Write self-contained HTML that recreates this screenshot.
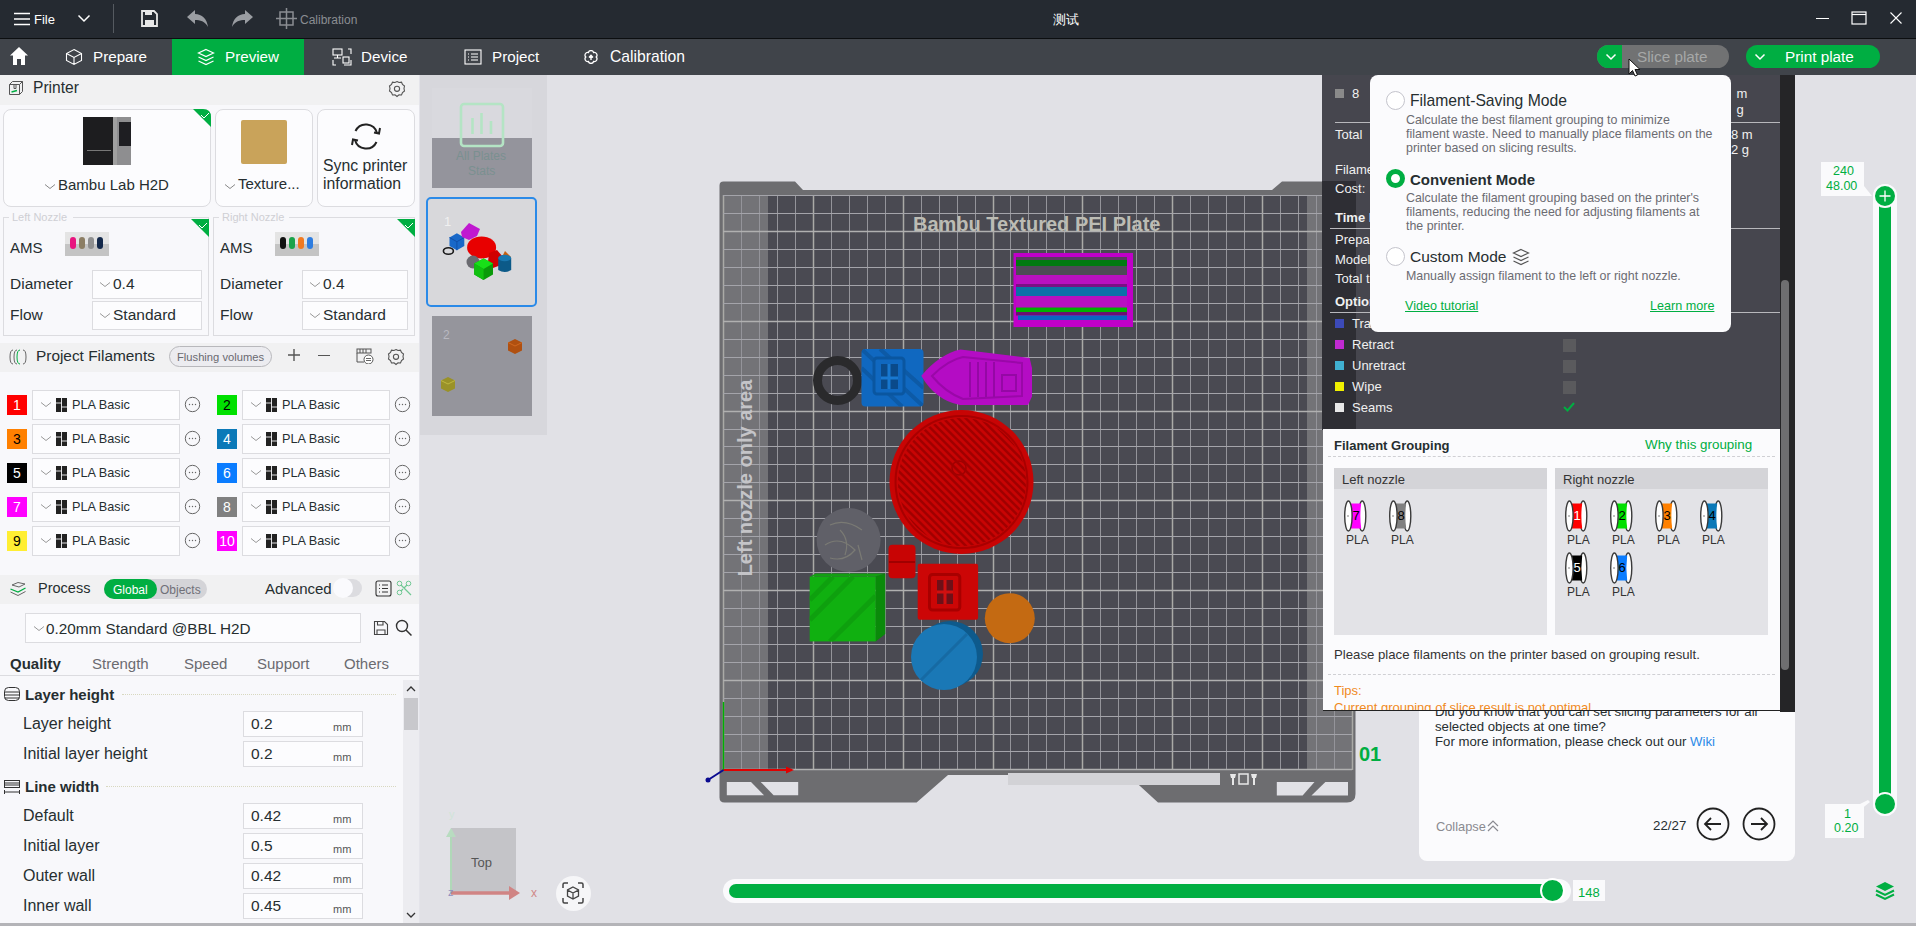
<!DOCTYPE html>
<html><head><meta charset="utf-8">
<style>
*{margin:0;padding:0;box-sizing:border-box}
html,body{width:1916px;height:926px;overflow:hidden;background:#e2e2e7;font-family:"Liberation Sans",sans-serif;position:relative}
.a{position:absolute}
.t{position:absolute;white-space:nowrap}
</style></head><body>
<div class="a" style="left:0px;top:0px;width:1916px;height:38px;background:#252a31;"></div>
<div class="a" style="left:0px;top:38px;width:1916px;height:1px;background:#0c0e10;"></div>
<svg class="a" style="left:13px;top:11px;" width="18" height="16" viewBox="0 0 18 16"><path d="M1 2.5H17M1 8H17M1 13.5H17" stroke="#fff" stroke-width="1.6"/></svg>
<div class="t" style="left:34px;top:12.50px;font-size:13px;line-height:13px;color:#fff;">File</div>
<svg class="a" style="left:77px;top:14px;" width="14" height="9" viewBox="0 0 14 9"><path d="M1.5 1.5L7 7L12.5 1.5" stroke="#fff" stroke-width="1.5" fill="none"/></svg>
<div class="a" style="left:113px;top:4px;width:1px;height:29px;background:#555a60;"></div>
<svg class="a" style="left:140px;top:9px;" width="19" height="19" viewBox="0 0 19 19"><path d="M2 2H14L17 5V17H2Z" stroke="#e8e8e8" stroke-width="1.8" fill="none"/><rect x="5" y="2" width="7" height="4" fill="#e8e8e8"/><rect x="5" y="11" width="9" height="6" fill="#e8e8e8"/></svg>
<svg class="a" style="left:186px;top:9px;" width="23" height="19" viewBox="0 0 23 19"><path d="M9 1L1 8L9 15V11C14 11 19 12 22 18C21 10 16 5 9 5Z" fill="#9a9da2"/></svg>
<svg class="a" style="left:231px;top:9px;" width="23" height="19" viewBox="0 0 23 19"><path d="M14 1L22 8L14 15V11C9 11 4 12 1 18C2 10 7 5 14 5Z" fill="#9a9da2"/></svg>
<svg class="a" style="left:276px;top:8px;" width="21" height="22" viewBox="0 0 21 22"><rect x="4" y="4" width="13" height="13" stroke="#8a8d92" stroke-width="1.5" fill="none"/><path d="M10.5 0V21M0 10.5H21" stroke="#8a8d92" stroke-width="1.5"/></svg>
<div class="t" style="left:300px;top:14.34px;font-size:12px;line-height:12px;color:#8a8d92;">Calibration</div>
<div class="t" style="left:1053px;top:12.50px;font-size:13px;line-height:13px;color:#fff;">测试</div>
<div class="a" style="left:1816px;top:18px;width:13px;height:1px;background:#fff;"></div>
<svg class="a" style="left:1851px;top:11px;" width="16" height="14" viewBox="0 0 16 14"><rect x="1" y="1" width="14" height="12" stroke="#fff" stroke-width="1.2" fill="none"/><path d="M1 3.5H15" stroke="#fff" stroke-width="1.2"/></svg>
<svg class="a" style="left:1889px;top:11px;" width="14" height="14" viewBox="0 0 14 14"><path d="M1.5 1.5L12.5 12.5M12.5 1.5L1.5 12.5" stroke="#fff" stroke-width="1.1"/></svg>
<div class="a" style="left:0px;top:39px;width:1916px;height:36px;background:#40444a;"></div>
<svg class="a" style="left:9px;top:46px;" width="20" height="20" viewBox="0 0 20 20"><path d="M10 1L19 9.5H16V19H12V13H8V19H4V9.5H1Z" fill="#fff"/></svg>
<svg class="a" style="left:65px;top:48px;" width="18" height="18" viewBox="0 0 18 18"><path d="M9 1.5L16.5 5.5V12.5L9 16.5L1.5 12.5V5.5Z M1.5 5.5L9 9.5L16.5 5.5M9 9.5V16.5" stroke="#fff" stroke-width="1.1" fill="none"/></svg>
<div class="t" style="left:93px;top:48.63px;font-size:15.2px;line-height:15.2px;color:#fff;">Prepare</div>
<div class="a" style="left:172px;top:39px;width:132px;height:36px;background:#00ae42;"></div>
<svg class="a" style="left:197px;top:48px;" width="18" height="18" viewBox="0 0 18 18"><path d="M9 1.5L16.5 5L9 8.5L1.5 5Z" stroke="#fff" stroke-width="1.2" fill="none"/><path d="M1.5 9L9 12.5L16.5 9M1.5 13L9 16.5L16.5 13" stroke="#fff" stroke-width="1.2" fill="none"/></svg>
<div class="t" style="left:225px;top:48.63px;font-size:15.2px;line-height:15.2px;color:#fff;">Preview</div>
<svg class="a" style="left:332px;top:48px;" width="20" height="18" viewBox="0 0 20 18"><rect x="1" y="1" width="9" height="6" stroke="#fff" stroke-width="1.1" fill="none"/><path d="M5.5 7V10M2 10H9M1 12V17H4M19 6V1H16M12 17H19V12" stroke="#fff" stroke-width="1.1" fill="none"/><rect x="11" y="9" width="6" height="6" stroke="#fff" stroke-width="1.1" fill="none"/></svg>
<div class="t" style="left:361px;top:48.63px;font-size:15.2px;line-height:15.2px;color:#fff;">Device</div>
<svg class="a" style="left:464px;top:49px;" width="18" height="16" viewBox="0 0 18 16"><rect x="1" y="1" width="16" height="14" stroke="#fff" stroke-width="1.1" fill="none"/><path d="M4 5H5M7 5H14M4 8H5M7 8H14M4 11H5M7 11H14" stroke="#fff" stroke-width="1.1"/></svg>
<div class="t" style="left:492px;top:48.63px;font-size:15.2px;line-height:15.2px;color:#fff;">Project</div>
<svg class="a" style="left:584px;top:50px;" width="14" height="14" viewBox="0 0 14 14"><path d="M4.40 2.50A2.7 2.7 0 0 1 9.60 2.50A2.7 2.7 0 0 1 12.20 7.00A2.7 2.7 0 0 1 9.60 11.50A2.7 2.7 0 0 1 4.40 11.50A2.7 2.7 0 0 1 1.80 7.00A2.7 2.7 0 0 1 4.40 2.50Z" stroke="#fff" stroke-width="1.3" fill="none"/><path d="M7 10V5.5M5 7.5L7 5.3L9 7.5" stroke="#fff" stroke-width="1.4" fill="none"/></svg>
<div class="t" style="left:610px;top:48.81px;font-size:15.7px;line-height:15.7px;color:#fff;">Calibration</div>
<div class="a" style="left:1597px;top:45px;width:132px;height:23px;border-radius:12px;background:#717273;overflow:hidden"><div class="a" style="left:0;top:0;width:25px;height:23px;background:#00ae42"></div></div>
<svg class="a" style="left:1605px;top:53px;" width="12" height="8" viewBox="0 0 12 8"><path d="M1.5 1.5L6 6L10.5 1.5" stroke="#fff" stroke-width="1.5" fill="none"/></svg>
<div class="t" style="left:1637px;top:48.55px;font-size:15.3px;line-height:15.3px;color:#a6a8a8;">Slice plate</div>
<div class="a" style="left:1746px;top:45px;width:134px;height:23px;background:#00ae42;border-radius:12px"></div>
<svg class="a" style="left:1754px;top:53px;" width="12" height="8" viewBox="0 0 12 8"><path d="M1.5 1.5L6 6L10.5 1.5" stroke="#fff" stroke-width="1.5" fill="none"/></svg>
<div class="t" style="left:1785px;top:48.55px;font-size:15.3px;line-height:15.3px;color:#fff;">Print plate</div>
<div class="a" style="left:0px;top:75px;width:420px;height:851px;background:#f8f8fb;"></div>
<div class="a" style="left:419px;top:75px;width:1px;height:851px;background:#e4e4ea;"></div>
<div class="a" style="left:0px;top:75px;width:419px;height:30px;background:#f1f1f2;"></div>
<svg class="a" style="left:8px;top:80px;" width="16" height="16" viewBox="0 0 16 16"><path d="M1.5 4.5L4.5 1.5H14.5V11.5L11.5 14.5H1.5Z M1.5 4.5H11.5V14.5M11.5 4.5L14.5 1.5" stroke="#555" stroke-width="1" fill="none"/><path d="M3.5 12L9 10.5" stroke="#00ae42" stroke-width="1.5"/><path d="M6 4.5V8.5H8V4.5" stroke="#555" stroke-width="1" fill="none"/></svg>
<div class="t" style="left:33px;top:80.29px;font-size:15.6px;line-height:15.6px;color:#262e30;">Printer</div>
<svg class="a" style="left:388px;top:80px;" width="18" height="18" viewBox="0 0 18 18"><path d="M9 1.5L11 2.5L13.5 2.2L14.5 4.5L16.5 6L16 8.5L16.5 11L14.5 12.5L13.5 15L11 14.8L9 16.5L7 14.8L4.5 15L3.5 12.5L1.5 11L2 8.5L1.5 6L3.5 4.5L4.5 2.2L7 2.5Z" stroke="#555" stroke-width="1.1" fill="none"/><circle cx="9" cy="8.8" r="2.6" stroke="#555" stroke-width="1.1" fill="none"/></svg>
<div class="a" style="left:3px;top:109px;width:208px;height:98px;background:#fcfcfe;border:1px solid #dcdce0;border-radius:8px"></div>
<svg class="a" style="left:193px;top:109px;" width="18" height="18" viewBox="0 0 18 18"><path d="M0 0H10Q18 0 18 8V18Z" fill="#00ae42"/><path d="M8 6L11 9L16 4" stroke="#fff" stroke-width="1" fill="none"/></svg>
<div class="a" style="left:215px;top:109px;width:98px;height:98px;background:#fcfcfe;border:1px solid #dcdce0;border-radius:8px"></div>
<div class="a" style="left:317px;top:109px;width:98px;height:98px;background:#fcfcfe;border:1px solid #dcdce0;border-radius:8px"></div>
<div class="a" style="left:83px;top:117px;width:48px;height:48px;background:#1d1d1f;"></div>
<div class="a" style="left:113px;top:117px;width:4px;height:48px;background:#a0a0a0;"></div>
<div class="a" style="left:117px;top:117px;width:14px;height:48px;background:#8e8e90;"></div>
<div class="a" style="left:119px;top:122px;width:12px;height:24px;background:#1e1e22;"></div>
<div class="a" style="left:87px;top:150px;width:24px;height:1px;background:#777;"></div>
<svg class="a" style="left:44px;top:183px;" width="12" height="8" viewBox="0 0 12 8"><path d="M1 1.5L6 5.5L11 1.5" stroke="#888" stroke-width="1" fill="none"/></svg>
<div class="t" style="left:58px;top:176.80px;font-size:15px;line-height:15px;color:#262e30;">Bambu Lab H2D</div>
<div class="a" style="left:241px;top:120px;width:46px;height:44px;background:#c9a35a;border-radius:2px"></div>
<svg class="a" style="left:224px;top:183px;" width="12" height="8" viewBox="0 0 12 8"><path d="M1 1.5L6 5.5L11 1.5" stroke="#888" stroke-width="1" fill="none"/></svg>
<div class="t" style="left:238px;top:175.80px;font-size:15px;line-height:15px;color:#262e30;">Texture...</div>
<svg class="a" style="left:350px;top:123px;" width="32" height="27" viewBox="0 0 32 27"><path d="M27 10A11.5 11.5 0 0 0 5.5 8" stroke="#222" stroke-width="2" fill="none"/><path d="M5 17A11.5 11.5 0 0 0 26.5 19" stroke="#222" stroke-width="2" fill="none"/><path d="M24 9.5L29 10.5L30 5" stroke="#222" stroke-width="2" fill="none"/><path d="M8 17.5L3 16.5L2 22" stroke="#222" stroke-width="2" fill="none"/></svg>
<div class="t" style="left:323px;top:158.13px;font-size:15.8px;line-height:15.8px;color:#262e30;">Sync printer</div>
<div class="t" style="left:323px;top:176.13px;font-size:15.8px;line-height:15.8px;color:#262e30;">information</div>
<div class="a" style="left:3px;top:217px;width:206px;height:119px;background:none;border:1px solid #dcdce0"></div>
<div class="a" style="left:9px;top:210px;width:64px;height:14px;background:#f8f8fb;"></div>
<div class="t" style="left:12px;top:212.19px;font-size:11px;line-height:11px;color:#cfcfd4;">Left Nozzle</div>
<svg class="a" style="left:191px;top:219px;" width="18" height="18" viewBox="0 0 18 18"><path d="M0 0H18V18Z" fill="#00ae42"/><path d="M8 6L11 9L16 4" stroke="#fff" stroke-width="1" fill="none"/></svg>
<div class="t" style="left:10px;top:239.80px;font-size:15px;line-height:15px;color:#262e30;">AMS</div>
<div class="a" style="left:65px;top:232px;width:44px;height:12px;background:#e4e4e4;"></div>
<div class="a" style="left:65px;top:244px;width:44px;height:12px;background:#c4c4c4;"></div>
<div class="a" style="left:70px;top:237px;width:6px;height:12px;background:#e8157f;border-radius:3px"></div>
<div class="a" style="left:79px;top:237px;width:6px;height:12px;background:#8c7e64;border-radius:3px"></div>
<div class="a" style="left:88px;top:237px;width:6px;height:12px;background:#8f8f8f;border-radius:3px"></div>
<div class="a" style="left:97px;top:237px;width:6px;height:12px;background:#13284a;border-radius:3px"></div>
<div class="t" style="left:10px;top:276.38px;font-size:15.5px;line-height:15.5px;color:#262e30;">Diameter</div>
<div class="a" style="left:92px;top:270px;width:110px;height:29px;background:#fcfcfe;border:1px solid #dcdce0"></div>
<svg class="a" style="left:99px;top:281px;" width="12" height="8" viewBox="0 0 12 8"><path d="M1 1.5L6 5.5L11 1.5" stroke="#999" stroke-width="1" fill="none"/></svg>
<div class="t" style="left:113px;top:276.38px;font-size:15.5px;line-height:15.5px;color:#262e30;">0.4</div>
<div class="t" style="left:10px;top:307.38px;font-size:15.5px;line-height:15.5px;color:#262e30;">Flow</div>
<div class="a" style="left:92px;top:301px;width:110px;height:29px;background:#fcfcfe;border:1px solid #dcdce0"></div>
<svg class="a" style="left:99px;top:312px;" width="12" height="8" viewBox="0 0 12 8"><path d="M1 1.5L6 5.5L11 1.5" stroke="#999" stroke-width="1" fill="none"/></svg>
<div class="t" style="left:113px;top:307.38px;font-size:15.5px;line-height:15.5px;color:#262e30;">Standard</div>
<div class="a" style="left:213px;top:217px;width:202px;height:119px;background:none;border:1px solid #dcdce0"></div>
<div class="a" style="left:219px;top:210px;width:70px;height:14px;background:#f8f8fb;"></div>
<div class="t" style="left:222px;top:212.19px;font-size:11px;line-height:11px;color:#cfcfd4;">Right Nozzle</div>
<svg class="a" style="left:397px;top:219px;" width="18" height="18" viewBox="0 0 18 18"><path d="M0 0H18V18Z" fill="#00ae42"/><path d="M8 6L11 9L16 4" stroke="#fff" stroke-width="1" fill="none"/></svg>
<div class="t" style="left:220px;top:239.80px;font-size:15px;line-height:15px;color:#262e30;">AMS</div>
<div class="a" style="left:275px;top:232px;width:44px;height:12px;background:#e4e4e4;"></div>
<div class="a" style="left:275px;top:244px;width:44px;height:12px;background:#c4c4c4;"></div>
<div class="a" style="left:280px;top:237px;width:6px;height:12px;background:#111;border-radius:3px"></div>
<div class="a" style="left:289px;top:237px;width:6px;height:12px;background:#1aa34a;border-radius:3px"></div>
<div class="a" style="left:298px;top:237px;width:6px;height:12px;background:#f27a20;border-radius:3px"></div>
<div class="a" style="left:307px;top:237px;width:6px;height:12px;background:#2e7de0;border-radius:3px"></div>
<div class="t" style="left:220px;top:276.38px;font-size:15.5px;line-height:15.5px;color:#262e30;">Diameter</div>
<div class="a" style="left:302px;top:270px;width:106px;height:29px;background:#fcfcfe;border:1px solid #dcdce0"></div>
<svg class="a" style="left:309px;top:281px;" width="12" height="8" viewBox="0 0 12 8"><path d="M1 1.5L6 5.5L11 1.5" stroke="#999" stroke-width="1" fill="none"/></svg>
<div class="t" style="left:323px;top:276.38px;font-size:15.5px;line-height:15.5px;color:#262e30;">0.4</div>
<div class="t" style="left:220px;top:307.38px;font-size:15.5px;line-height:15.5px;color:#262e30;">Flow</div>
<div class="a" style="left:302px;top:301px;width:106px;height:29px;background:#fcfcfe;border:1px solid #dcdce0"></div>
<svg class="a" style="left:309px;top:312px;" width="12" height="8" viewBox="0 0 12 8"><path d="M1 1.5L6 5.5L11 1.5" stroke="#999" stroke-width="1" fill="none"/></svg>
<div class="t" style="left:323px;top:307.38px;font-size:15.5px;line-height:15.5px;color:#262e30;">Standard</div>
<div class="a" style="left:0px;top:343px;width:419px;height:29px;background:#f1f1f2;"></div>
<svg class="a" style="left:9px;top:349px;" width="18" height="16" viewBox="0 0 18 16"><path d="M4 1Q1 1 1 8Q1 15 4 15M8 1Q5 1 5 8Q5 15 8 15M14 1Q17 1 17 8Q17 15 14 15" stroke="#666" stroke-width="1" fill="none"/><path d="M11 1Q8 1 8 8Q8 15 11 15" stroke="#00ae42" stroke-width="1" fill="none"/></svg>
<div class="t" style="left:36px;top:348.46px;font-size:15.4px;line-height:15.4px;color:#262e30;">Project Filaments</div>
<div class="a" style="left:169px;top:346px;width:103px;height:21px;background:#ececf0;border:1px solid #b8b8bc;border-radius:11px"></div>
<div class="t" style="left:177px;top:352.02px;font-size:11.2px;line-height:11.2px;color:#6a6a70;">Flushing volumes</div>
<svg class="a" style="left:288px;top:349px;" width="12" height="12" viewBox="0 0 12 12"><path d="M6 0V12M0 6H12" stroke="#555" stroke-width="1.4"/></svg>
<div class="a" style="left:318px;top:355px;width:12px;height:1.4px;background:#555;"></div>
<svg class="a" style="left:356px;top:348px;" width="18" height="16" viewBox="0 0 18 16"><rect x="1" y="1" width="14" height="4" stroke="#555" stroke-width="1" fill="none"/><path d="M4 1V5M7 1V5M10 1V5M1 5V14H8" stroke="#555" stroke-width="1" fill="none"/><circle cx="12.5" cy="11.5" r="4.5" stroke="#555" stroke-width="1" fill="#fff"/><path d="M10 10.5H15M10 12.5H15" stroke="#555" stroke-width="0.9"/></svg>
<svg class="a" style="left:387px;top:348px;" width="18" height="18" viewBox="0 0 18 18"><path d="M9 1.5L11 2.5L13.5 2.2L14.5 4.5L16.5 6L16 8.5L16.5 11L14.5 12.5L13.5 15L11 14.8L9 16.5L7 14.8L4.5 15L3.5 12.5L1.5 11L2 8.5L1.5 6L3.5 4.5L4.5 2.2L7 2.5Z" stroke="#555" stroke-width="1.1" fill="none"/><circle cx="9" cy="8.8" r="2.6" stroke="#555" stroke-width="1.1" fill="none"/></svg>
<div class="a" style="left:7px;top:395px;width:20px;height:20px;background:#ff0000;"></div>
<div class="t" style="left:7px;top:395px;width:20px;height:20px;line-height:20px;text-align:center;font-size:14px;color:#fff">1</div>
<div class="a" style="left:32px;top:390px;width:148px;height:30px;background:#fcfcfe;border:1px solid #dcdce0"></div>
<svg class="a" style="left:40px;top:401px;" width="12" height="8" viewBox="0 0 12 8"><path d="M1 1.5L6 5.5L11 1.5" stroke="#999" stroke-width="1" fill="none"/></svg>
<svg class="a" style="left:56px;top:398px;" width="11" height="14" viewBox="0 0 11 14"><rect x="0" y="0" width="11" height="14" fill="#222"/><path d="M5.5 0V14M0 5H5.5M5.5 9H11" stroke="#f8f8fb" stroke-width="0.9"/></svg>
<div class="t" style="left:72px;top:398.75px;font-size:12.7px;line-height:12.7px;color:#262e30;">PLA Basic</div>
<svg class="a" style="left:184px;top:396px;" width="17" height="17" viewBox="0 0 17 17"><circle cx="8.5" cy="8.5" r="7.2" stroke="#666" stroke-width="1" fill="none"/><circle cx="5.5" cy="8.5" r="0.7" fill="#666"/><circle cx="8.5" cy="8.5" r="0.7" fill="#666"/><circle cx="11.5" cy="8.5" r="0.7" fill="#666"/></svg>
<div class="a" style="left:217px;top:395px;width:20px;height:20px;background:#00e000;"></div>
<div class="t" style="left:217px;top:395px;width:20px;height:20px;line-height:20px;text-align:center;font-size:14px;color:#000">2</div>
<div class="a" style="left:242px;top:390px;width:148px;height:30px;background:#fcfcfe;border:1px solid #dcdce0"></div>
<svg class="a" style="left:250px;top:401px;" width="12" height="8" viewBox="0 0 12 8"><path d="M1 1.5L6 5.5L11 1.5" stroke="#999" stroke-width="1" fill="none"/></svg>
<svg class="a" style="left:266px;top:398px;" width="11" height="14" viewBox="0 0 11 14"><rect x="0" y="0" width="11" height="14" fill="#222"/><path d="M5.5 0V14M0 5H5.5M5.5 9H11" stroke="#f8f8fb" stroke-width="0.9"/></svg>
<div class="t" style="left:282px;top:398.75px;font-size:12.7px;line-height:12.7px;color:#262e30;">PLA Basic</div>
<svg class="a" style="left:394px;top:396px;" width="17" height="17" viewBox="0 0 17 17"><circle cx="8.5" cy="8.5" r="7.2" stroke="#666" stroke-width="1" fill="none"/><circle cx="5.5" cy="8.5" r="0.7" fill="#666"/><circle cx="8.5" cy="8.5" r="0.7" fill="#666"/><circle cx="11.5" cy="8.5" r="0.7" fill="#666"/></svg>
<div class="a" style="left:7px;top:429px;width:20px;height:20px;background:#ff8000;"></div>
<div class="t" style="left:7px;top:429px;width:20px;height:20px;line-height:20px;text-align:center;font-size:14px;color:#000">3</div>
<div class="a" style="left:32px;top:424px;width:148px;height:30px;background:#fcfcfe;border:1px solid #dcdce0"></div>
<svg class="a" style="left:40px;top:435px;" width="12" height="8" viewBox="0 0 12 8"><path d="M1 1.5L6 5.5L11 1.5" stroke="#999" stroke-width="1" fill="none"/></svg>
<svg class="a" style="left:56px;top:432px;" width="11" height="14" viewBox="0 0 11 14"><rect x="0" y="0" width="11" height="14" fill="#222"/><path d="M5.5 0V14M0 5H5.5M5.5 9H11" stroke="#f8f8fb" stroke-width="0.9"/></svg>
<div class="t" style="left:72px;top:432.75px;font-size:12.7px;line-height:12.7px;color:#262e30;">PLA Basic</div>
<svg class="a" style="left:184px;top:430px;" width="17" height="17" viewBox="0 0 17 17"><circle cx="8.5" cy="8.5" r="7.2" stroke="#666" stroke-width="1" fill="none"/><circle cx="5.5" cy="8.5" r="0.7" fill="#666"/><circle cx="8.5" cy="8.5" r="0.7" fill="#666"/><circle cx="11.5" cy="8.5" r="0.7" fill="#666"/></svg>
<div class="a" style="left:217px;top:429px;width:20px;height:20px;background:#0b79b8;"></div>
<div class="t" style="left:217px;top:429px;width:20px;height:20px;line-height:20px;text-align:center;font-size:14px;color:#fff">4</div>
<div class="a" style="left:242px;top:424px;width:148px;height:30px;background:#fcfcfe;border:1px solid #dcdce0"></div>
<svg class="a" style="left:250px;top:435px;" width="12" height="8" viewBox="0 0 12 8"><path d="M1 1.5L6 5.5L11 1.5" stroke="#999" stroke-width="1" fill="none"/></svg>
<svg class="a" style="left:266px;top:432px;" width="11" height="14" viewBox="0 0 11 14"><rect x="0" y="0" width="11" height="14" fill="#222"/><path d="M5.5 0V14M0 5H5.5M5.5 9H11" stroke="#f8f8fb" stroke-width="0.9"/></svg>
<div class="t" style="left:282px;top:432.75px;font-size:12.7px;line-height:12.7px;color:#262e30;">PLA Basic</div>
<svg class="a" style="left:394px;top:430px;" width="17" height="17" viewBox="0 0 17 17"><circle cx="8.5" cy="8.5" r="7.2" stroke="#666" stroke-width="1" fill="none"/><circle cx="5.5" cy="8.5" r="0.7" fill="#666"/><circle cx="8.5" cy="8.5" r="0.7" fill="#666"/><circle cx="11.5" cy="8.5" r="0.7" fill="#666"/></svg>
<div class="a" style="left:7px;top:463px;width:20px;height:20px;background:#000;"></div>
<div class="t" style="left:7px;top:463px;width:20px;height:20px;line-height:20px;text-align:center;font-size:14px;color:#fff">5</div>
<div class="a" style="left:32px;top:458px;width:148px;height:30px;background:#fcfcfe;border:1px solid #dcdce0"></div>
<svg class="a" style="left:40px;top:469px;" width="12" height="8" viewBox="0 0 12 8"><path d="M1 1.5L6 5.5L11 1.5" stroke="#999" stroke-width="1" fill="none"/></svg>
<svg class="a" style="left:56px;top:466px;" width="11" height="14" viewBox="0 0 11 14"><rect x="0" y="0" width="11" height="14" fill="#222"/><path d="M5.5 0V14M0 5H5.5M5.5 9H11" stroke="#f8f8fb" stroke-width="0.9"/></svg>
<div class="t" style="left:72px;top:466.75px;font-size:12.7px;line-height:12.7px;color:#262e30;">PLA Basic</div>
<svg class="a" style="left:184px;top:464px;" width="17" height="17" viewBox="0 0 17 17"><circle cx="8.5" cy="8.5" r="7.2" stroke="#666" stroke-width="1" fill="none"/><circle cx="5.5" cy="8.5" r="0.7" fill="#666"/><circle cx="8.5" cy="8.5" r="0.7" fill="#666"/><circle cx="11.5" cy="8.5" r="0.7" fill="#666"/></svg>
<div class="a" style="left:217px;top:463px;width:20px;height:20px;background:#0a7cff;"></div>
<div class="t" style="left:217px;top:463px;width:20px;height:20px;line-height:20px;text-align:center;font-size:14px;color:#fff">6</div>
<div class="a" style="left:242px;top:458px;width:148px;height:30px;background:#fcfcfe;border:1px solid #dcdce0"></div>
<svg class="a" style="left:250px;top:469px;" width="12" height="8" viewBox="0 0 12 8"><path d="M1 1.5L6 5.5L11 1.5" stroke="#999" stroke-width="1" fill="none"/></svg>
<svg class="a" style="left:266px;top:466px;" width="11" height="14" viewBox="0 0 11 14"><rect x="0" y="0" width="11" height="14" fill="#222"/><path d="M5.5 0V14M0 5H5.5M5.5 9H11" stroke="#f8f8fb" stroke-width="0.9"/></svg>
<div class="t" style="left:282px;top:466.75px;font-size:12.7px;line-height:12.7px;color:#262e30;">PLA Basic</div>
<svg class="a" style="left:394px;top:464px;" width="17" height="17" viewBox="0 0 17 17"><circle cx="8.5" cy="8.5" r="7.2" stroke="#666" stroke-width="1" fill="none"/><circle cx="5.5" cy="8.5" r="0.7" fill="#666"/><circle cx="8.5" cy="8.5" r="0.7" fill="#666"/><circle cx="11.5" cy="8.5" r="0.7" fill="#666"/></svg>
<div class="a" style="left:7px;top:497px;width:20px;height:20px;background:#ff00ff;"></div>
<div class="t" style="left:7px;top:497px;width:20px;height:20px;line-height:20px;text-align:center;font-size:14px;color:#fff">7</div>
<div class="a" style="left:32px;top:492px;width:148px;height:30px;background:#fcfcfe;border:1px solid #dcdce0"></div>
<svg class="a" style="left:40px;top:503px;" width="12" height="8" viewBox="0 0 12 8"><path d="M1 1.5L6 5.5L11 1.5" stroke="#999" stroke-width="1" fill="none"/></svg>
<svg class="a" style="left:56px;top:500px;" width="11" height="14" viewBox="0 0 11 14"><rect x="0" y="0" width="11" height="14" fill="#222"/><path d="M5.5 0V14M0 5H5.5M5.5 9H11" stroke="#f8f8fb" stroke-width="0.9"/></svg>
<div class="t" style="left:72px;top:500.75px;font-size:12.7px;line-height:12.7px;color:#262e30;">PLA Basic</div>
<svg class="a" style="left:184px;top:498px;" width="17" height="17" viewBox="0 0 17 17"><circle cx="8.5" cy="8.5" r="7.2" stroke="#666" stroke-width="1" fill="none"/><circle cx="5.5" cy="8.5" r="0.7" fill="#666"/><circle cx="8.5" cy="8.5" r="0.7" fill="#666"/><circle cx="11.5" cy="8.5" r="0.7" fill="#666"/></svg>
<div class="a" style="left:217px;top:497px;width:20px;height:20px;background:#808080;"></div>
<div class="t" style="left:217px;top:497px;width:20px;height:20px;line-height:20px;text-align:center;font-size:14px;color:#fff">8</div>
<div class="a" style="left:242px;top:492px;width:148px;height:30px;background:#fcfcfe;border:1px solid #dcdce0"></div>
<svg class="a" style="left:250px;top:503px;" width="12" height="8" viewBox="0 0 12 8"><path d="M1 1.5L6 5.5L11 1.5" stroke="#999" stroke-width="1" fill="none"/></svg>
<svg class="a" style="left:266px;top:500px;" width="11" height="14" viewBox="0 0 11 14"><rect x="0" y="0" width="11" height="14" fill="#222"/><path d="M5.5 0V14M0 5H5.5M5.5 9H11" stroke="#f8f8fb" stroke-width="0.9"/></svg>
<div class="t" style="left:282px;top:500.75px;font-size:12.7px;line-height:12.7px;color:#262e30;">PLA Basic</div>
<svg class="a" style="left:394px;top:498px;" width="17" height="17" viewBox="0 0 17 17"><circle cx="8.5" cy="8.5" r="7.2" stroke="#666" stroke-width="1" fill="none"/><circle cx="5.5" cy="8.5" r="0.7" fill="#666"/><circle cx="8.5" cy="8.5" r="0.7" fill="#666"/><circle cx="11.5" cy="8.5" r="0.7" fill="#666"/></svg>
<div class="a" style="left:7px;top:531px;width:20px;height:20px;background:#ffee33;"></div>
<div class="t" style="left:7px;top:531px;width:20px;height:20px;line-height:20px;text-align:center;font-size:14px;color:#000">9</div>
<div class="a" style="left:32px;top:526px;width:148px;height:30px;background:#fcfcfe;border:1px solid #dcdce0"></div>
<svg class="a" style="left:40px;top:537px;" width="12" height="8" viewBox="0 0 12 8"><path d="M1 1.5L6 5.5L11 1.5" stroke="#999" stroke-width="1" fill="none"/></svg>
<svg class="a" style="left:56px;top:534px;" width="11" height="14" viewBox="0 0 11 14"><rect x="0" y="0" width="11" height="14" fill="#222"/><path d="M5.5 0V14M0 5H5.5M5.5 9H11" stroke="#f8f8fb" stroke-width="0.9"/></svg>
<div class="t" style="left:72px;top:534.75px;font-size:12.7px;line-height:12.7px;color:#262e30;">PLA Basic</div>
<svg class="a" style="left:184px;top:532px;" width="17" height="17" viewBox="0 0 17 17"><circle cx="8.5" cy="8.5" r="7.2" stroke="#666" stroke-width="1" fill="none"/><circle cx="5.5" cy="8.5" r="0.7" fill="#666"/><circle cx="8.5" cy="8.5" r="0.7" fill="#666"/><circle cx="11.5" cy="8.5" r="0.7" fill="#666"/></svg>
<div class="a" style="left:217px;top:531px;width:20px;height:20px;background:#ff00ff;"></div>
<div class="t" style="left:217px;top:531px;width:20px;height:20px;line-height:20px;text-align:center;font-size:14px;color:#fff">10</div>
<div class="a" style="left:242px;top:526px;width:148px;height:30px;background:#fcfcfe;border:1px solid #dcdce0"></div>
<svg class="a" style="left:250px;top:537px;" width="12" height="8" viewBox="0 0 12 8"><path d="M1 1.5L6 5.5L11 1.5" stroke="#999" stroke-width="1" fill="none"/></svg>
<svg class="a" style="left:266px;top:534px;" width="11" height="14" viewBox="0 0 11 14"><rect x="0" y="0" width="11" height="14" fill="#222"/><path d="M5.5 0V14M0 5H5.5M5.5 9H11" stroke="#f8f8fb" stroke-width="0.9"/></svg>
<div class="t" style="left:282px;top:534.75px;font-size:12.7px;line-height:12.7px;color:#262e30;">PLA Basic</div>
<svg class="a" style="left:394px;top:532px;" width="17" height="17" viewBox="0 0 17 17"><circle cx="8.5" cy="8.5" r="7.2" stroke="#666" stroke-width="1" fill="none"/><circle cx="5.5" cy="8.5" r="0.7" fill="#666"/><circle cx="8.5" cy="8.5" r="0.7" fill="#666"/><circle cx="11.5" cy="8.5" r="0.7" fill="#666"/></svg>
<div class="a" style="left:0px;top:575px;width:419px;height:29px;background:#f1f1f2;"></div>
<svg class="a" style="left:9px;top:581px;" width="18" height="16" viewBox="0 0 18 16"><path d="M3 4L9 1.5L16 3L10 6Z" stroke="#666" stroke-width="1" fill="none"/><path d="M1.5 8L9 11L16.5 7" stroke="#00ae42" stroke-width="1.3" fill="none"/><path d="M1.5 11L9 14.5L16.5 10.5" stroke="#666" stroke-width="1" fill="none"/></svg>
<div class="t" style="left:38px;top:581.23px;font-size:14.5px;line-height:14.5px;color:#262e30;">Process</div>
<div class="a" style="left:104px;top:579px;width:103px;height:20px;background:#d4d4d8;border-radius:10px"></div>
<div class="a" style="left:104px;top:579px;width:53px;height:20px;background:#00ae42;border-radius:10px"></div>
<div class="t" style="left:113px;top:584.34px;font-size:12px;line-height:12px;color:#fff;">Global</div>
<div class="t" style="left:160px;top:584.34px;font-size:12px;line-height:12px;color:#707078;">Objects</div>
<div class="t" style="left:265px;top:580.80px;font-size:15px;line-height:15px;color:#262e30;">Advanced</div>
<div class="a" style="left:334px;top:579px;width:28px;height:18px;background:#dcdce0;border-radius:9px"></div>
<div class="a" style="left:333px;top:578px;width:20px;height:20px;border-radius:50%;background:#fafafd"></div>
<svg class="a" style="left:375px;top:580px;" width="17" height="17" viewBox="0 0 17 17"><rect x="1" y="1" width="15" height="15" rx="2" stroke="#333" stroke-width="1.1" fill="none"/><path d="M4 5H5M7 5H13M4 8.5H5M7 8.5H13M4 12H5M7 12H13" stroke="#333" stroke-width="1.1"/></svg>
<svg class="a" style="left:396px;top:580px;" width="16" height="16" viewBox="0 0 16 16"><circle cx="3.5" cy="3.5" r="2.3" stroke="#70c894" stroke-width="1" fill="none"/><circle cx="12.5" cy="3.5" r="2.3" stroke="#70c894" stroke-width="1" fill="none"/><circle cx="3.5" cy="12.5" r="2.3" stroke="#70c894" stroke-width="1" fill="none"/><path d="M5 5L15 15M11 5L8 8M5 11L7 9" stroke="#70c894" stroke-width="1.2"/></svg>
<div class="a" style="left:25px;top:613px;width:336px;height:30px;background:#fcfcfe;border:1px solid #dcdce0"></div>
<svg class="a" style="left:33px;top:625px;" width="12" height="8" viewBox="0 0 12 8"><path d="M1 1.5L6 5.5L11 1.5" stroke="#999" stroke-width="1" fill="none"/></svg>
<div class="t" style="left:46px;top:620.55px;font-size:15.3px;line-height:15.3px;color:#262e30;">0.20mm Standard @BBL H2D</div>
<svg class="a" style="left:373px;top:620px;" width="16" height="16" viewBox="0 0 16 16"><path d="M1.5 1.5H11.5L14.5 4.5V14.5H1.5Z" stroke="#444" stroke-width="1.1" fill="none"/><path d="M4.5 1.5V5H10V1.5M4 14.5V10H12V14.5" stroke="#444" stroke-width="1.1" fill="none"/></svg>
<svg class="a" style="left:395px;top:619px;" width="18" height="18" viewBox="0 0 18 18"><circle cx="7" cy="7" r="5.5" stroke="#333" stroke-width="1.4" fill="none"/><path d="M11 11L16.5 16.5" stroke="#333" stroke-width="1.5"/></svg>
<div class="t" style="left:10px;top:655.80px;font-size:15px;line-height:15px;color:#262e30;font-weight:700;">Quality</div>
<div class="t" style="left:92px;top:655.80px;font-size:15px;line-height:15px;color:#6b6b70;">Strength</div>
<div class="t" style="left:184px;top:655.80px;font-size:15px;line-height:15px;color:#6b6b70;">Speed</div>
<div class="t" style="left:257px;top:655.80px;font-size:15px;line-height:15px;color:#6b6b70;">Support</div>
<div class="t" style="left:344px;top:655.80px;font-size:15px;line-height:15px;color:#6b6b70;">Others</div>
<div class="a" style="left:0px;top:675px;width:419px;height:1px;background:#dcdce0;"></div>
<div class="a" style="left:403px;top:680px;width:16px;height:246px;background:#ececf0;"></div>
<svg class="a" style="left:405px;top:684px;" width="12" height="10" viewBox="0 0 12 10"><path d="M2 7L6 3L10 7" stroke="#333" stroke-width="1.3" fill="none"/></svg>
<div class="a" style="left:404px;top:698px;width:14px;height:32px;background:#c8c8cc;"></div>
<svg class="a" style="left:405px;top:910px;" width="12" height="10" viewBox="0 0 12 10"><path d="M2 3L6 7L10 3" stroke="#333" stroke-width="1.3" fill="none"/></svg>
<svg class="a" style="left:4px;top:687px;" width="16" height="14" viewBox="0 0 16 14"><rect x="0.5" y="0.5" width="15" height="13" rx="4" stroke="#333" stroke-width="1" fill="none"/><path d="M0.5 5H15.5M0.5 8H15.5M0.5 11H15.5" stroke="#333" stroke-width="1.2"/></svg>
<div class="t" style="left:25px;top:686.80px;font-size:15px;line-height:15px;color:#262e30;font-weight:700;">Layer height</div>
<div class="a" style="left:122px;top:694px;width:274px;height:0;border-top:1px dotted #d8d8c0"></div>
<div class="t" style="left:23px;top:715.96px;font-size:16px;line-height:16px;color:#262e30;">Layer height</div>
<div class="a" style="left:243px;top:711px;width:120px;height:26px;background:#fcfcfe;border:1px solid #dcdce0"></div>
<div class="t" style="left:251px;top:716.38px;font-size:15.5px;line-height:15.5px;color:#262e30;">0.2</div>
<div class="t" style="left:333px;top:722.19px;font-size:11px;line-height:11px;color:#555;">mm</div>
<div class="t" style="left:23px;top:745.96px;font-size:16px;line-height:16px;color:#262e30;">Initial layer height</div>
<div class="a" style="left:243px;top:741px;width:120px;height:26px;background:#fcfcfe;border:1px solid #dcdce0"></div>
<div class="t" style="left:251px;top:746.38px;font-size:15.5px;line-height:15.5px;color:#262e30;">0.2</div>
<div class="t" style="left:333px;top:752.19px;font-size:11px;line-height:11px;color:#555;">mm</div>
<svg class="a" style="left:4px;top:780px;" width="16" height="14" viewBox="0 0 16 14"><rect x="0.5" y="0.5" width="15" height="7" stroke="#333" stroke-width="1" fill="none"/><path d="M0.5 3H15.5M0.5 5H15.5" stroke="#333" stroke-width="1"/><path d="M0.5 10V14M15.5 10V14M0.5 12H15.5" stroke="#333" stroke-width="1"/></svg>
<div class="t" style="left:25px;top:778.80px;font-size:15px;line-height:15px;color:#262e30;font-weight:700;">Line width</div>
<div class="a" style="left:106px;top:786px;width:290px;height:0;border-top:1px dotted #d8d8c0"></div>
<div class="t" style="left:23px;top:807.96px;font-size:16px;line-height:16px;color:#262e30;">Default</div>
<div class="a" style="left:243px;top:803px;width:120px;height:26px;background:#fcfcfe;border:1px solid #dcdce0"></div>
<div class="t" style="left:251px;top:808.38px;font-size:15.5px;line-height:15.5px;color:#262e30;">0.42</div>
<div class="t" style="left:333px;top:814.19px;font-size:11px;line-height:11px;color:#555;">mm</div>
<div class="t" style="left:23px;top:837.96px;font-size:16px;line-height:16px;color:#262e30;">Initial layer</div>
<div class="a" style="left:243px;top:833px;width:120px;height:26px;background:#fcfcfe;border:1px solid #dcdce0"></div>
<div class="t" style="left:251px;top:838.38px;font-size:15.5px;line-height:15.5px;color:#262e30;">0.5</div>
<div class="t" style="left:333px;top:844.19px;font-size:11px;line-height:11px;color:#555;">mm</div>
<div class="t" style="left:23px;top:867.96px;font-size:16px;line-height:16px;color:#262e30;">Outer wall</div>
<div class="a" style="left:243px;top:863px;width:120px;height:26px;background:#fcfcfe;border:1px solid #dcdce0"></div>
<div class="t" style="left:251px;top:868.38px;font-size:15.5px;line-height:15.5px;color:#262e30;">0.42</div>
<div class="t" style="left:333px;top:874.19px;font-size:11px;line-height:11px;color:#555;">mm</div>
<div class="t" style="left:23px;top:897.96px;font-size:16px;line-height:16px;color:#262e30;">Inner wall</div>
<div class="a" style="left:243px;top:893px;width:120px;height:26px;background:#fcfcfe;border:1px solid #dcdce0"></div>
<div class="t" style="left:251px;top:898.38px;font-size:15.5px;line-height:15.5px;color:#262e30;">0.45</div>
<div class="t" style="left:333px;top:904.19px;font-size:11px;line-height:11px;color:#555;">mm</div>
<div class="a" style="left:243px;top:923px;width:120px;height:3px;background:none;border-top:1px solid #dcdce0"></div>
<div class="a" style="left:420px;top:75px;width:1496px;height:851px;background:#e1e1e6;"></div>
<div class="a" style="left:420px;top:75px;width:127px;height:360px;background:#d7d7dc;"></div>
<div class="a" style="left:432px;top:88px;width:100px;height:50px;background:#d9d9de;"></div>
<div class="a" style="left:432px;top:138px;width:100px;height:50px;background:#94949c;"></div>
<svg class="a" style="left:458px;top:101px;" width="49" height="47" viewBox="0 0 49 47"><rect x="3" y="3" width="42" height="42" rx="3" stroke="#b4e4c4" stroke-width="2.6" fill="none"/><path d="M14.5 17V33M23.5 12V33M33 20V33" stroke="#b4e4c4" stroke-width="2.6"/></svg>
<div class="t" style="left:456px;top:150.34px;font-size:12px;line-height:12px;color:#7a9090;">All Plates</div>
<div class="t" style="left:468px;top:164.84px;font-size:12px;line-height:12px;color:#7a9090;">Stats</div>
<div class="a" style="left:426px;top:197px;width:111px;height:110px;background:#d8d8db;border:2px solid #2b8ae8;border-radius:5px"></div>
<div class="t" style="left:444px;top:214.50px;font-size:13px;line-height:13px;color:#f0f0f0;">1</div>
<svg class="a" style="left:435px;top:215px;" width="90" height="75" viewBox="0 0 90 75"><ellipse cx="13.4" cy="36" rx="5" ry="3.3" stroke="#1a1a1a" stroke-width="1.6" fill="none"/>
<path d="M21.9 18.2L29.3 22.5V31L21.9 35.2L14.5 31V22.5Z" fill="#1868c8"/><path d="M14.5 22.5L21.9 26.7L29.3 22.5M21.9 26.7V35.2" stroke="#1050a8" stroke-width="1" fill="none"/>
<path d="M26 17L34 8L45 14L42 21L34 25L27 22Z" fill="#c018d0"/>
<ellipse cx="46.6" cy="32.4" rx="14.5" ry="11" fill="#e80000"/>
<circle cx="38" cy="47" r="6.5" fill="#6a6a70"/>
<path d="M70 36L76 42L72 47L67 42Z" fill="#c86010"/><path d="M54 38L62 35L68 42L66 50L58 53L53 47Z" fill="#d00000"/>
<path d="M48.6 43.5L58 48.5V59.5L48.6 65L39.2 59.5V48.5Z" fill="#0a9a0a"/><path d="M39.2 48.5L48.6 43.5L58 48.5L48.6 54Z" fill="#18e018"/><path d="M39.2 48.5L48.6 54V65L39.2 59.5Z" fill="#10c010"/>
<path d="M63.2 43V55Q69.7 59 76.2 55V43Z" fill="#0c5a88"/><ellipse cx="69.7" cy="43" rx="6.5" ry="3.2" fill="#1a78b0"/></svg>
<div class="a" style="left:432px;top:316px;width:100px;height:100px;background:#95959c;"></div>
<div class="t" style="left:443px;top:329.34px;font-size:12px;line-height:12px;color:#b8b8c0;">2</div>
<svg class="a" style="left:507px;top:338px;" width="16" height="17" viewBox="0 0 16 17"><path d="M8 1L15 4.5V12.5L8 16L1 12.5V4.5Z" fill="#b05010"/><path d="M1 4.5L8 8L15 4.5" stroke="#d06820" fill="none"/></svg>
<svg class="a" style="left:440px;top:376px;" width="16" height="17" viewBox="0 0 16 17"><path d="M8 1L15 4.5V12.5L8 16L1 12.5V4.5Z" fill="#9a9228"/><path d="M1 4.5L8 8L15 4.5" stroke="#c0b840" fill="none"/></svg>
<svg class="a" style="left:700px;top:170px;" width="680" height="640" viewBox="0 0 680 640">
<path d="M23.5 11.5Q19.5 11.5 19.5 15.5V627.5Q19.5 632.6 24.5 632.6H216.6L248 605H428L458 632.6H647Q655.5 632.6 655.5 624V15.5Q655.5 11.5 651.5 11.5H582L572 20H103L95 11.5Z" fill="#6d6d70"/>
<path d="M26.8 611.9H51L64 625.3H26.8Z" fill="#e1e1e6"/><path d="M60.7 611.9H98.2V625.3H73.6Z" fill="#e1e1e6"/>
<path d="M576.8 611.9H614.5L602.6 625.5H576.8Z" fill="#e1e1e6"/><path d="M625.4 611.9H648V625.5H611.5Z" fill="#e1e1e6"/>
</svg>
<div class="a" style="left:723px;top:195px;width:45px;height:575px;background:#737377;"></div>
<div class="a" style="left:768px;top:195px;width:539px;height:575px;background:#4a4a52;"></div>
<div class="a" style="left:1307px;top:195px;width:45px;height:575px;background:#737377;"></div>
<svg class="a" style="left:700px;top:170px;" width="680" height="640" viewBox="0 0 680 640"><path d="M23.5 25V600" stroke="#aaaaa6" stroke-width="1.5"/><path d="M41.5 25V600" stroke="#94949a" stroke-width="1"/><path d="M59.5 25V600" stroke="#94949a" stroke-width="1"/><path d="M77.5 25V600" stroke="#94949a" stroke-width="1"/><path d="M95.5 25V600" stroke="#94949a" stroke-width="1"/><path d="M113.5 25V600" stroke="#aaaaa6" stroke-width="1.5"/><path d="M131.5 25V600" stroke="#94949a" stroke-width="1"/><path d="M149.5 25V600" stroke="#94949a" stroke-width="1"/><path d="M167.5 25V600" stroke="#94949a" stroke-width="1"/><path d="M185.5 25V600" stroke="#94949a" stroke-width="1"/><path d="M203.5 25V600" stroke="#aaaaa6" stroke-width="1.5"/><path d="M221.5 25V600" stroke="#94949a" stroke-width="1"/><path d="M239.5 25V600" stroke="#94949a" stroke-width="1"/><path d="M257.5 25V600" stroke="#94949a" stroke-width="1"/><path d="M275.5 25V600" stroke="#94949a" stroke-width="1"/><path d="M293.5 25V600" stroke="#aaaaa6" stroke-width="1.5"/><path d="M310.5 25V600" stroke="#94949a" stroke-width="1"/><path d="M328.5 25V600" stroke="#94949a" stroke-width="1"/><path d="M346.5 25V600" stroke="#94949a" stroke-width="1"/><path d="M364.5 25V600" stroke="#94949a" stroke-width="1"/><path d="M382.5 25V600" stroke="#aaaaa6" stroke-width="1.5"/><path d="M400.5 25V600" stroke="#94949a" stroke-width="1"/><path d="M418.5 25V600" stroke="#94949a" stroke-width="1"/><path d="M436.5 25V600" stroke="#94949a" stroke-width="1"/><path d="M454.5 25V600" stroke="#94949a" stroke-width="1"/><path d="M472.5 25V600" stroke="#aaaaa6" stroke-width="1.5"/><path d="M490.5 25V600" stroke="#94949a" stroke-width="1"/><path d="M508.5 25V600" stroke="#94949a" stroke-width="1"/><path d="M526.5 25V600" stroke="#94949a" stroke-width="1"/><path d="M544.5 25V600" stroke="#94949a" stroke-width="1"/><path d="M562.5 25V600" stroke="#aaaaa6" stroke-width="1.5"/><path d="M580.5 25V600" stroke="#94949a" stroke-width="1"/><path d="M598.5 25V600" stroke="#94949a" stroke-width="1"/><path d="M616.5 25V600" stroke="#94949a" stroke-width="1"/><path d="M634.5 25V600" stroke="#94949a" stroke-width="1"/><path d="M652.5 25V600" stroke="#aaaaa6" stroke-width="1.5"/><path d="M23.0 599.5H652" stroke="#b0b0b0" stroke-width="1.5"/><path d="M23.0 581.5H652" stroke="#a4a4aa" stroke-width="1"/><path d="M23.0 564.5H652" stroke="#a4a4aa" stroke-width="1"/><path d="M23.0 546.5H652" stroke="#a4a4aa" stroke-width="1"/><path d="M23.0 528.5H652" stroke="#a4a4aa" stroke-width="1"/><path d="M23.0 510.5H652" stroke="#b0b0b0" stroke-width="1.5"/><path d="M23.0 492.5H652" stroke="#a4a4aa" stroke-width="1"/><path d="M23.0 474.5H652" stroke="#a4a4aa" stroke-width="1"/><path d="M23.0 456.5H652" stroke="#a4a4aa" stroke-width="1"/><path d="M23.0 438.5H652" stroke="#a4a4aa" stroke-width="1"/><path d="M23.0 420.5H652" stroke="#b0b0b0" stroke-width="1.5"/><path d="M23.0 402.5H652" stroke="#a4a4aa" stroke-width="1"/><path d="M23.0 384.5H652" stroke="#a4a4aa" stroke-width="1"/><path d="M23.0 366.5H652" stroke="#a4a4aa" stroke-width="1"/><path d="M23.0 348.5H652" stroke="#a4a4aa" stroke-width="1"/><path d="M23.0 330.5H652" stroke="#b0b0b0" stroke-width="1.5"/><path d="M23.0 312.5H652" stroke="#a4a4aa" stroke-width="1"/><path d="M23.0 294.5H652" stroke="#a4a4aa" stroke-width="1"/><path d="M23.0 276.5H652" stroke="#a4a4aa" stroke-width="1"/><path d="M23.0 259.5H652" stroke="#a4a4aa" stroke-width="1"/><path d="M23.0 241.5H652" stroke="#b0b0b0" stroke-width="1.5"/><path d="M23.0 223.5H652" stroke="#a4a4aa" stroke-width="1"/><path d="M23.0 205.5H652" stroke="#a4a4aa" stroke-width="1"/><path d="M23.0 187.5H652" stroke="#a4a4aa" stroke-width="1"/><path d="M23.0 169.5H652" stroke="#a4a4aa" stroke-width="1"/><path d="M23.0 151.5H652" stroke="#b0b0b0" stroke-width="1.5"/><path d="M23.0 133.5H652" stroke="#a4a4aa" stroke-width="1"/><path d="M23.0 115.5H652" stroke="#a4a4aa" stroke-width="1"/><path d="M23.0 97.5H652" stroke="#a4a4aa" stroke-width="1"/><path d="M23.0 79.5H652" stroke="#a4a4aa" stroke-width="1"/><path d="M23.0 61.5H652" stroke="#b0b0b0" stroke-width="1.5"/><path d="M23.0 43.5H652" stroke="#a4a4aa" stroke-width="1"/><path d="M23.0 25.5H652" stroke="#a4a4aa" stroke-width="1"/></svg>
<div class="a" style="left:1008px;top:773px;width:212px;height:12px;background:#d2d2d6;"></div>
<svg class="a" style="left:1228px;top:772px;" width="32" height="15" viewBox="0 0 32 15"><path d="M2 2H8L7 6H6V13H4V6H3Z" fill="#e8e8e8"/><rect x="11" y="2" width="9" height="10" stroke="#e8e8e8" stroke-width="1.5" fill="none"/><path d="M23 2H29L28 6H27V13H25V6H24Z" fill="#e8e8e8"/></svg>
<div class="t" style="left:913px;top:213.57px;font-size:20px;line-height:20px;color:#bcbcb4;font-weight:700;">Bambu Textured PEI Plate</div>
<div class="t" style="left:745px;top:478px;font-size:20px;line-height:20px;font-weight:700;color:#c4c4c8;transform:translate(-50%,-50%) rotate(-90deg)">Left nozzle only area</div>
<svg class="a" style="left:700px;top:690px;" width="100" height="100" viewBox="0 0 100 100"><path d="M23.5 80V12" stroke="#00b000" stroke-width="1.5"/><path d="M23.5 80H92" stroke="#e00000" stroke-width="2"/><path d="M86 76.5L94 80L86 83.5Z" fill="#e00000"/><path d="M23.5 80L8 90" stroke="#0a0a90" stroke-width="2"/><circle cx="8" cy="90" r="2.5" fill="#0a0a90"/></svg>
<div class="t" style="left:1359px;top:743.57px;font-size:20px;line-height:20px;color:#00ae42;font-weight:700;">01</div>
<svg class="a" style="left:700px;top:170px;" width="460" height="560" viewBox="0 0 460 560">
<rect x="313.5" y="83" width="119.5" height="74" fill="#c000c8"/>
<rect x="316" y="87" width="111" height="3" fill="#5a3a60"/>
<rect x="316" y="90" width="111" height="6" fill="#007a10"/>
<rect x="316" y="96" width="111" height="9" fill="#4d4a56"/>
<rect x="316" y="105" width="111" height="12" fill="#b810c0"/>
<rect x="316" y="114" width="111" height="3" fill="#7a1085"/>
<rect x="316" y="117" width="111" height="9" fill="#0c70a8"/>
<rect x="316" y="126" width="111" height="11" fill="#b810c0"/>
<rect x="316" y="137.5" width="111" height="4.5" fill="#00b000"/>
<rect x="316" y="142" width="111" height="3.5" fill="#6a1070"/>
<rect x="318" y="145.5" width="109" height="4.5" fill="#0a64c0"/>
</svg>
<svg class="a" style="left:800px;top:330px;" width="240" height="230" viewBox="0 0 240 230">
<circle cx="37.5" cy="50.5" r="20" stroke="#2a2a2c" stroke-width="9" fill="none"/>
<rect x="61.5" y="19" width="62" height="57.5" rx="4" fill="#1068c0"/>
<clipPath id="bq"><rect x="61.5" y="19" width="62" height="57.5" rx="4"/></clipPath><path clip-path="url(#bq)" d="M61.5 19L123.5 76.5M80 19L123.5 58M61.5 38L102 76.5" stroke="#0d5aa6" stroke-width="4"/>
<rect x="74" y="28" width="30" height="36" rx="3" stroke="#0a56a0" stroke-width="3" fill="#1068c0"/>
<rect x="81" y="34" width="17" height="25" fill="#0a4a8a"/><path d="M89 34V59M81 48H98" stroke="#1878d0" stroke-width="3"/>
<path d="M121.3 45.7Q140 24 160.5 19.6L229.6 28L232 38V66.5L228 75Q190 75 160 75Q135 70 121.3 45.7Z" fill="#b40cc4"/>
<path d="M132 46Q148 30 163 27L222 33V66L163 69Q145 62 132 46Z" stroke="#9a08a8" stroke-width="2" fill="none"/>
<path d="M170 32V67M178 32V67M186 32V67M194 32V67" stroke="#9508a5" stroke-width="2"/>
<rect x="202" y="45" width="14" height="16" stroke="#9508a5" stroke-width="2" fill="none"/>
<circle cx="161.5" cy="152" r="72" fill="#c80404"/>
<circle cx="161.5" cy="152" r="66" stroke="#a80000" stroke-width="2" fill="none"/>
</svg>
<svg class="a" style="left:889.5px;top:410px" width="144" height="144" viewBox="-72 -72 144 144"><defs><clipPath id="cc"><circle r="64"/></clipPath></defs><g clip-path="url(#cc)"><path d="M-225.0 -120L15.0 120" stroke="#a00000" stroke-width="2.5"/><path d="M-217.5 -120L22.5 120" stroke="#a00000" stroke-width="2.5"/><path d="M-210.0 -120L30.0 120" stroke="#a00000" stroke-width="2.5"/><path d="M-202.5 -120L37.5 120" stroke="#a00000" stroke-width="2.5"/><path d="M-195.0 -120L45.0 120" stroke="#a00000" stroke-width="2.5"/><path d="M-187.5 -120L52.5 120" stroke="#a00000" stroke-width="2.5"/><path d="M-180.0 -120L60.0 120" stroke="#a00000" stroke-width="2.5"/><path d="M-172.5 -120L67.5 120" stroke="#a00000" stroke-width="2.5"/><path d="M-165.0 -120L75.0 120" stroke="#a00000" stroke-width="2.5"/><path d="M-157.5 -120L82.5 120" stroke="#a00000" stroke-width="2.5"/><path d="M-150.0 -120L90.0 120" stroke="#a00000" stroke-width="2.5"/><path d="M-142.5 -120L97.5 120" stroke="#a00000" stroke-width="2.5"/><path d="M-135.0 -120L105.0 120" stroke="#a00000" stroke-width="2.5"/><path d="M-127.5 -120L112.5 120" stroke="#a00000" stroke-width="2.5"/><path d="M-120.0 -120L120.0 120" stroke="#a00000" stroke-width="2.5"/><path d="M-112.5 -120L127.5 120" stroke="#a00000" stroke-width="2.5"/><path d="M-105.0 -120L135.0 120" stroke="#a00000" stroke-width="2.5"/><path d="M-97.5 -120L142.5 120" stroke="#a00000" stroke-width="2.5"/><path d="M-90.0 -120L150.0 120" stroke="#a00000" stroke-width="2.5"/><path d="M-82.5 -120L157.5 120" stroke="#a00000" stroke-width="2.5"/><path d="M-75.0 -120L165.0 120" stroke="#a00000" stroke-width="2.5"/><path d="M-67.5 -120L172.5 120" stroke="#a00000" stroke-width="2.5"/><path d="M-60.0 -120L180.0 120" stroke="#a00000" stroke-width="2.5"/><path d="M-52.5 -120L187.5 120" stroke="#a00000" stroke-width="2.5"/><path d="M-45.0 -120L195.0 120" stroke="#a00000" stroke-width="2.5"/><path d="M-37.5 -120L202.5 120" stroke="#a00000" stroke-width="2.5"/><path d="M-30.0 -120L210.0 120" stroke="#a00000" stroke-width="2.5"/><path d="M-22.5 -120L217.5 120" stroke="#a00000" stroke-width="2.5"/><path d="M-15.0 -120L225.0 120" stroke="#a00000" stroke-width="2.5"/></g><circle cx="-3" cy="-14" r="7" stroke="#a00000" stroke-width="1.5" fill="none"/></svg>
<svg class="a" style="left:800px;top:500px;" width="260" height="200" viewBox="0 0 260 200">
<circle cx="48.6" cy="40" r="32" fill="#606068"/>
<path d="M30 25Q45 18 62 30M25 45Q40 35 55 50Q45 62 30 58M40 30Q50 40 45 55M58 45L62 60" stroke="#7a7a74" stroke-width="1.2" fill="none"/>
<rect x="88.5" y="44.7" width="27" height="33.5" rx="4" fill="#c80404"/>
<path d="M89 62H115" stroke="#a00000" stroke-width="2"/>
<path d="M9.7 76.6L16 73.4H85.3L75.6 76.6Z" fill="#12a012"/>
<path d="M75.6 76.6L85.3 73.4V134L75.6 141.4Z" fill="#0a8a0a"/>
<rect x="9.7" y="76.6" width="66" height="64.8" fill="#10b010"/>
<clipPath id="gq"><rect x="9.7" y="76.6" width="66" height="64.8"/></clipPath><path clip-path="url(#gq)" d="M9.7 120L53 76.6M30 141.4L75.6 96M9.7 100L33 76.6" stroke="#0ea00e" stroke-width="5"/>
<rect x="117.7" y="63.7" width="60.4" height="56" rx="2" fill="#cc0606"/>
<rect x="129.5" y="74.5" width="30.3" height="35.5" rx="3" stroke="#a80000" stroke-width="3" fill="#cc0606"/>
<rect x="137" y="80" width="16" height="24" fill="#6e1018"/><path d="M145 80V104M137 92H153" stroke="#d01010" stroke-width="3"/>
<circle cx="209.8" cy="118.2" r="25" fill="#c46a12"/>
<circle cx="950" cy="153" r="0" fill="none"/>
<circle cx="150" cy="154" r="33" fill="#0e5a8c"/>
<circle cx="144" cy="157" r="33" fill="#1a78b6"/>
<path d="M121 180L167 134" stroke="#166aa4" stroke-width="3"/>
</svg>
<div class="a" style="left:451px;top:828px;width:65px;height:65px;background:#c4c4c8;"></div>
<svg class="a" style="left:440px;top:815px;" width="100" height="90" viewBox="0 0 100 90"><path d="M11 78V16" stroke="#b0d8b8" stroke-width="2"/><path d="M6 22L11 13L16 22Z" fill="#b8dcc0"/><path d="M11 78H70" stroke="#d08484" stroke-width="3.5"/><path d="M69 71L80 78L69 85Z" fill="#d08484"/></svg>
<div class="t" style="left:471px;top:855.50px;font-size:13px;line-height:13px;color:#555;">Top</div>
<div class="t" style="left:531px;top:887.34px;font-size:12px;line-height:12px;color:#d08888;">x</div>
<div class="t" style="left:448px;top:887.19px;font-size:11px;line-height:11px;color:#9090c0;">z</div>
<div class="t" style="left:449px;top:809.19px;font-size:11px;line-height:11px;color:#d0e4d8;">y</div>
<div class="a" style="left:556px;top:876px;width:35px;height:35px;border-radius:50%;background:#f6f6f8"></div>
<svg class="a" style="left:562px;top:882px;" width="22" height="22" viewBox="0 0 22 22"><path d="M1 6V2.5Q1 1 2.5 1H6M16 1H19.5Q21 1 21 2.5V6M21 16V19.5Q21 21 19.5 21H16M6 21H2.5Q1 21 1 19.5V16" stroke="#444" stroke-width="1.5" fill="none"/><path d="M11 5L16.5 8V14L11 17L5.5 14V8Z M5.5 8L11 11L16.5 8M11 11V17" stroke="#444" stroke-width="1.3" fill="none"/></svg>
<div class="a" style="left:723px;top:879px;width:848px;height:24px;background:#fafafc;border-radius:12px"></div>
<div class="a" style="left:729px;top:884px;width:824px;height:14px;background:#00ae42;border-radius:7px"></div>
<div class="a" style="left:1540px;top:878px;width:25px;height:25px;border-radius:50%;background:#00ae42;border:2px solid #fff"></div>
<div class="a" style="left:1573px;top:880px;width:32px;height:21px;background:#fafafc;"></div>
<div class="t" style="left:1578px;top:885.50px;font-size:13px;line-height:13px;color:#00ae42;">148</div>
<div class="a" style="left:1873px;top:184px;width:24px;height:632px;background:#fafafc;border-radius:12px"></div>
<div class="a" style="left:1879px;top:196px;width:12px;height:608px;background:#00ae42;"></div>
<div class="a" style="left:1873px;top:184px;width:24px;height:24px;border-radius:50%;background:#00ae42;border:2px solid #fafafc"></div>
<svg class="a" style="left:1878px;top:189px;" width="14" height="14" viewBox="0 0 14 14"><path d="M7 1.5V12.5M1.5 7H12.5" stroke="#fff" stroke-width="1.3"/></svg>
<div class="a" style="left:1873px;top:792px;width:24px;height:24px;border-radius:50%;background:#00ae42;border:2px solid #fafafc"></div>
<div class="a" style="left:1821px;top:162px;width:43px;height:34px;background:#fafafc;"></div>
<svg class="a" style="left:1860px;top:186px;" width="12" height="12" viewBox="0 0 12 12"><path d="M0 0H4L12 10L0 10Z" fill="#fafafc"/></svg>
<div class="t" style="left:1833px;top:165.42px;font-size:12.5px;line-height:12.5px;color:#00ae42;">240</div>
<div class="t" style="left:1826px;top:180.42px;font-size:12.5px;line-height:12.5px;color:#00ae42;">48.00</div>
<div class="a" style="left:1825px;top:804px;width:39px;height:34px;background:#fafafc;"></div>
<svg class="a" style="left:1860px;top:800px;" width="10" height="10" viewBox="0 0 10 10"><path d="M0 10V4L8 0L10 2Z" fill="#fafafc"/></svg>
<div class="t" style="left:1844px;top:807.92px;font-size:12.5px;line-height:12.5px;color:#00ae42;">1</div>
<div class="t" style="left:1834px;top:822.42px;font-size:12.5px;line-height:12.5px;color:#00ae42;">0.20</div>
<svg class="a" style="left:1875px;top:881px;" width="20" height="20" viewBox="0 0 20 20"><path d="M10 1L19 5.5L10 10L1 5.5Z" fill="#00ae42"/><path d="M1 9.5L10 14L19 9.5M1 13.5L10 18L19 13.5" stroke="#00ae42" stroke-width="2" fill="none"/></svg>
<div class="a" style="left:0px;top:923px;width:1916px;height:3px;background:#b4b4b8;"></div>
<div class="a" style="left:1419px;top:690px;width:376px;height:171px;background:#fbfbfd;border-radius:8px"></div>
<div class="t" style="left:1435px;top:705.33px;font-size:13.2px;line-height:13.2px;color:#262e30;">Did you know that you can set slicing parameters for all</div>
<div class="t" style="left:1435px;top:720.33px;font-size:13.2px;line-height:13.2px;color:#262e30;">selected objects at one time?</div>
<div class="t" style="left:1435px;top:735.33px;font-size:13.2px;line-height:13.2px;color:#262e30;">For more information, please check out our <span style="color:#2b8ae8">Wiki</span></div>
<div class="t" style="left:1436px;top:820.66px;font-size:12.8px;line-height:12.8px;color:#8a8a90;">Collapse</div>
<svg class="a" style="left:1486px;top:819px;" width="14" height="14" viewBox="0 0 14 14"><path d="M2 7L7 2L12 7M2 12L7 7L12 12" stroke="#8a8a90" stroke-width="1.2" fill="none"/></svg>
<div class="t" style="left:1653px;top:819.24px;font-size:13.3px;line-height:13.3px;color:#262e30;">22/27</div>
<svg class="a" style="left:1695px;top:807px;" width="36" height="36" viewBox="0 0 36 36"><circle cx="18" cy="17" r="15.5" stroke="#222" stroke-width="1.8" fill="none"/><path d="M10 17H26M16 11L10 17L16 23" stroke="#222" stroke-width="1.8" fill="none"/></svg>
<svg class="a" style="left:1741px;top:807px;" width="36" height="36" viewBox="0 0 36 36"><circle cx="18" cy="17" r="15.5" stroke="#222" stroke-width="1.8" fill="none"/><path d="M10 17H26M20 11L26 17L20 23" stroke="#222" stroke-width="1.8" fill="none"/></svg>
<div class="a" style="left:1322px;top:75px;width:458px;height:355px;background:#46464e;"></div>
<div class="a" style="left:1322px;top:181px;width:34px;height:249px;background:#2e2e34;"></div>
<div class="a" style="left:1780px;top:75px;width:15px;height:637px;background:#252527;"></div>
<div class="a" style="left:1781px;top:280px;width:8px;height:390px;background:#6e6e70;border-radius:4px"></div>
<div class="a" style="left:1335px;top:89px;width:9px;height:9px;background:#8a8a8a;"></div>
<div class="t" style="left:1352px;top:86.50px;font-size:13px;line-height:13px;color:#f0f0f0;">8</div>
<div class="a" style="left:1335px;top:122px;width:445px;height:1px;background:#b8b8bc;"></div>
<div class="t" style="left:1335px;top:127.50px;font-size:13px;line-height:13px;color:#f0f0f0;">Total</div>
<div class="t" style="left:1733px;top:86.50px;font-size:13px;line-height:13px;color:#f0f0f0;">&nbsp;m</div>
<div class="t" style="left:1733px;top:102.50px;font-size:13px;line-height:13px;color:#f0f0f0;">&nbsp;g</div>
<div class="t" style="left:1731px;top:127.50px;font-size:13px;line-height:13px;color:#f0f0f0;">8 m</div>
<div class="t" style="left:1731px;top:142.50px;font-size:13px;line-height:13px;color:#f0f0f0;">2 g</div>
<div class="t" style="left:1335px;top:162.50px;font-size:13px;line-height:13px;color:#f0f0f0;">Filament</div>
<div class="t" style="left:1335px;top:181.50px;font-size:13px;line-height:13px;color:#f0f0f0;">Cost:</div>
<div class="t" style="left:1335px;top:210.50px;font-size:13px;line-height:13px;color:#f0f0f0;font-weight:700;">Time Estimation</div>
<div class="a" style="left:1330px;top:228px;width:450px;height:1px;background:#b8b8bc;"></div>
<div class="t" style="left:1335px;top:232.50px;font-size:13px;line-height:13px;color:#f0f0f0;">Prepare</div>
<div class="t" style="left:1335px;top:252.50px;font-size:13px;line-height:13px;color:#f0f0f0;">Model</div>
<div class="t" style="left:1335px;top:271.50px;font-size:13px;line-height:13px;color:#f0f0f0;">Total time</div>
<div class="t" style="left:1335px;top:294.50px;font-size:13px;line-height:13px;color:#f0f0f0;font-weight:700;">Options</div>
<div class="a" style="left:1330px;top:312px;width:450px;height:1px;background:#b8b8bc;"></div>
<div class="a" style="left:1335px;top:319px;width:9px;height:9px;background:#3c4ab8;"></div>
<div class="t" style="left:1352px;top:316.50px;font-size:13px;line-height:13px;color:#f0f0f0;">Travel</div>
<div class="a" style="left:1563px;top:318px;width:13px;height:13px;background:#5a5a5d;"></div>
<div class="a" style="left:1335px;top:340px;width:9px;height:9px;background:#c02ad0;"></div>
<div class="t" style="left:1352px;top:337.50px;font-size:13px;line-height:13px;color:#f0f0f0;">Retract</div>
<div class="a" style="left:1563px;top:339px;width:13px;height:13px;background:#5a5a5d;"></div>
<div class="a" style="left:1335px;top:361px;width:9px;height:9px;background:#40b0d0;"></div>
<div class="t" style="left:1352px;top:358.50px;font-size:13px;line-height:13px;color:#f0f0f0;">Unretract</div>
<div class="a" style="left:1563px;top:360px;width:13px;height:13px;background:#5a5a5d;"></div>
<div class="a" style="left:1335px;top:382px;width:9px;height:9px;background:#f0f000;"></div>
<div class="t" style="left:1352px;top:379.50px;font-size:13px;line-height:13px;color:#f0f0f0;">Wipe</div>
<div class="a" style="left:1563px;top:381px;width:13px;height:13px;background:#5a5a5d;"></div>
<div class="a" style="left:1335px;top:403px;width:9px;height:9px;background:#e8e8e8;"></div>
<div class="t" style="left:1352px;top:400.50px;font-size:13px;line-height:13px;color:#f0f0f0;">Seams</div>
<svg class="a" style="left:1562px;top:401px;" width="14" height="12" viewBox="0 0 14 12"><path d="M2 6L5.5 9.5L12 2" stroke="#00ae42" stroke-width="2" fill="none"/></svg>
<div class="a" style="left:1370px;top:75px;width:361px;height:257px;background:#fbfbfd;border-radius:8px"></div>
<div class="a" style="left:1386px;top:91px;width:19px;height:19px;border-radius:50%;border:1px solid #c4c4cc;background:#fff"></div>
<div class="t" style="left:1410px;top:93.21px;font-size:15.7px;line-height:15.7px;color:#262e30;">Filament-Saving Mode</div>
<div class="t" style="left:1406px;top:114.00px;font-size:12.4px;line-height:12.4px;color:#6b6b72;">Calculate the best filament grouping to minimize</div>
<div class="t" style="left:1406px;top:128.00px;font-size:12.4px;line-height:12.4px;color:#6b6b72;">filament waste. Need to manually place filaments on the</div>
<div class="t" style="left:1406px;top:142.00px;font-size:12.4px;line-height:12.4px;color:#6b6b72;">printer based on slicing results.</div>
<div class="a" style="left:1386px;top:169px;width:19px;height:19px;border-radius:50%;border:5px solid #00ae42;background:#fff"></div>
<div class="t" style="left:1410px;top:171.80px;font-size:15px;line-height:15px;color:#262e30;font-weight:700;">Convenient Mode</div>
<div class="t" style="left:1406px;top:192.00px;font-size:12.4px;line-height:12.4px;color:#6b6b72;">Calculate the filament grouping based on the printer's</div>
<div class="t" style="left:1406px;top:206.00px;font-size:12.4px;line-height:12.4px;color:#6b6b72;">filaments, reducing the need for adjusting filaments at</div>
<div class="t" style="left:1406px;top:220.00px;font-size:12.4px;line-height:12.4px;color:#6b6b72;">the printer.</div>
<div class="a" style="left:1386px;top:247px;width:19px;height:19px;border-radius:50%;border:1px solid #c4c4cc;background:#fff"></div>
<div class="t" style="left:1410px;top:249.38px;font-size:15.5px;line-height:15.5px;color:#262e30;">Custom Mode</div>
<svg class="a" style="left:1512px;top:248px;" width="18" height="18" viewBox="0 0 18 18"><path d="M9 1.5L16.5 5L9 8.5L1.5 5Z" stroke="#555" stroke-width="1.2" fill="none"/><path d="M1.5 9L9 12.5L16.5 9M1.5 13L9 16.5L16.5 13" stroke="#555" stroke-width="1.2" fill="none"/></svg>
<div class="t" style="left:1406px;top:270.00px;font-size:12.4px;line-height:12.4px;color:#6b6b72;">Manually assign filament to the left or right nozzle.</div>
<div class="t" style="left:1405px;top:299.83px;font-size:12.6px;line-height:12.6px;color:#00ae42;text-decoration:underline">Video tutorial</div>
<div class="t" style="left:1650px;top:299.83px;font-size:12.6px;line-height:12.6px;color:#00ae42;text-decoration:underline">Learn more</div>
<svg class="a" style="left:1628px;top:58px;" width="14" height="20" viewBox="0 0 14 20"><path d="M1 1V16L4.5 12.5L7 18L9.5 17L7 11.5H12Z" fill="#fff" stroke="#111" stroke-width="1"/></svg>
<div class="a" style="left:1323px;top:429px;width:457px;height:282px;background:#fbfbfd;"></div>
<div class="a" style="left:1323px;top:710px;width:457px;height:1px;background:#222;"></div>
<div class="t" style="left:1334px;top:438.50px;font-size:13px;line-height:13px;color:#262e30;font-weight:700;">Filament Grouping</div>
<div class="t" style="left:1645px;top:438.16px;font-size:13.4px;line-height:13.4px;color:#00ae42;">Why this grouping</div>
<div class="a" style="left:1328px;top:456px;width:447px;height:0;border-top:1px dashed #d0d0d4"></div>
<div class="a" style="left:1334px;top:468px;width:213px;height:167px;background:#e3e3e7;"></div>
<div class="a" style="left:1334px;top:468px;width:213px;height:21px;background:#d4d4d8;"></div>
<div class="t" style="left:1342px;top:472.50px;font-size:13px;line-height:13px;color:#333;">Left nozzle</div>
<div class="a" style="left:1555px;top:468px;width:213px;height:167px;background:#e3e3e7;"></div>
<div class="a" style="left:1555px;top:468px;width:213px;height:21px;background:#d4d4d8;"></div>
<div class="t" style="left:1563px;top:472.50px;font-size:13px;line-height:13px;color:#333;">Right nozzle</div>
<svg class="a" style="left:1344px;top:500px;" width="24" height="33" viewBox="0 0 24 33"><ellipse cx="18.2" cy="16" rx="3.6" ry="15" fill="#fff" stroke="#3a3a3a" stroke-width="1.4"/><path d="M5 3.5H17.2Q15.5 16 17.2 28.5H5Z" fill="#ff00ff"/><ellipse cx="4.4" cy="16" rx="3.7" ry="15" fill="#fff" stroke="#3a3a3a" stroke-width="1.4"/><circle cx="4" cy="16" r="0.7" fill="#555"/></svg>
<div class="t" style="left:1350px;top:509px;width:12px;text-align:center;font-size:13px;line-height:14px;color:#000">7</div>
<div class="t" style="left:1346px;top:534.34px;font-size:12px;line-height:12px;color:#333;">PLA</div>
<svg class="a" style="left:1389px;top:500px;" width="24" height="33" viewBox="0 0 24 33"><ellipse cx="18.2" cy="16" rx="3.6" ry="15" fill="#fff" stroke="#3a3a3a" stroke-width="1.4"/><path d="M5 3.5H17.2Q15.5 16 17.2 28.5H5Z" fill="#808080"/><ellipse cx="4.4" cy="16" rx="3.7" ry="15" fill="#fff" stroke="#3a3a3a" stroke-width="1.4"/><circle cx="4" cy="16" r="0.7" fill="#555"/></svg>
<div class="t" style="left:1395px;top:509px;width:12px;text-align:center;font-size:13px;line-height:14px;color:#000">8</div>
<div class="t" style="left:1391px;top:534.34px;font-size:12px;line-height:12px;color:#333;">PLA</div>
<svg class="a" style="left:1565px;top:500px;" width="24" height="33" viewBox="0 0 24 33"><ellipse cx="18.2" cy="16" rx="3.6" ry="15" fill="#fff" stroke="#3a3a3a" stroke-width="1.4"/><path d="M5 3.5H17.2Q15.5 16 17.2 28.5H5Z" fill="#ff0000"/><ellipse cx="4.4" cy="16" rx="3.7" ry="15" fill="#fff" stroke="#3a3a3a" stroke-width="1.4"/><circle cx="4" cy="16" r="0.7" fill="#555"/></svg>
<div class="t" style="left:1571px;top:509px;width:12px;text-align:center;font-size:13px;line-height:14px;color:#fff">1</div>
<div class="t" style="left:1567px;top:534.34px;font-size:12px;line-height:12px;color:#333;">PLA</div>
<svg class="a" style="left:1610px;top:500px;" width="24" height="33" viewBox="0 0 24 33"><ellipse cx="18.2" cy="16" rx="3.6" ry="15" fill="#fff" stroke="#3a3a3a" stroke-width="1.4"/><path d="M5 3.5H17.2Q15.5 16 17.2 28.5H5Z" fill="#00e000"/><ellipse cx="4.4" cy="16" rx="3.7" ry="15" fill="#fff" stroke="#3a3a3a" stroke-width="1.4"/><circle cx="4" cy="16" r="0.7" fill="#555"/></svg>
<div class="t" style="left:1616px;top:509px;width:12px;text-align:center;font-size:13px;line-height:14px;color:#000">2</div>
<div class="t" style="left:1612px;top:534.34px;font-size:12px;line-height:12px;color:#333;">PLA</div>
<svg class="a" style="left:1655px;top:500px;" width="24" height="33" viewBox="0 0 24 33"><ellipse cx="18.2" cy="16" rx="3.6" ry="15" fill="#fff" stroke="#3a3a3a" stroke-width="1.4"/><path d="M5 3.5H17.2Q15.5 16 17.2 28.5H5Z" fill="#ff8000"/><ellipse cx="4.4" cy="16" rx="3.7" ry="15" fill="#fff" stroke="#3a3a3a" stroke-width="1.4"/><circle cx="4" cy="16" r="0.7" fill="#555"/></svg>
<div class="t" style="left:1661px;top:509px;width:12px;text-align:center;font-size:13px;line-height:14px;color:#000">3</div>
<div class="t" style="left:1657px;top:534.34px;font-size:12px;line-height:12px;color:#333;">PLA</div>
<svg class="a" style="left:1700px;top:500px;" width="24" height="33" viewBox="0 0 24 33"><ellipse cx="18.2" cy="16" rx="3.6" ry="15" fill="#fff" stroke="#3a3a3a" stroke-width="1.4"/><path d="M5 3.5H17.2Q15.5 16 17.2 28.5H5Z" fill="#0b79b8"/><ellipse cx="4.4" cy="16" rx="3.7" ry="15" fill="#fff" stroke="#3a3a3a" stroke-width="1.4"/><circle cx="4" cy="16" r="0.7" fill="#555"/></svg>
<div class="t" style="left:1706px;top:509px;width:12px;text-align:center;font-size:13px;line-height:14px;color:#000">4</div>
<div class="t" style="left:1702px;top:534.34px;font-size:12px;line-height:12px;color:#333;">PLA</div>
<svg class="a" style="left:1565px;top:552px;" width="24" height="33" viewBox="0 0 24 33"><ellipse cx="18.2" cy="16" rx="3.6" ry="15" fill="#fff" stroke="#3a3a3a" stroke-width="1.4"/><path d="M5 3.5H17.2Q15.5 16 17.2 28.5H5Z" fill="#000"/><ellipse cx="4.4" cy="16" rx="3.7" ry="15" fill="#fff" stroke="#3a3a3a" stroke-width="1.4"/><circle cx="4" cy="16" r="0.7" fill="#555"/></svg>
<div class="t" style="left:1571px;top:561px;width:12px;text-align:center;font-size:13px;line-height:14px;color:#fff">5</div>
<div class="t" style="left:1567px;top:586.34px;font-size:12px;line-height:12px;color:#333;">PLA</div>
<svg class="a" style="left:1610px;top:552px;" width="24" height="33" viewBox="0 0 24 33"><ellipse cx="18.2" cy="16" rx="3.6" ry="15" fill="#fff" stroke="#3a3a3a" stroke-width="1.4"/><path d="M5 3.5H17.2Q15.5 16 17.2 28.5H5Z" fill="#0a7cff"/><ellipse cx="4.4" cy="16" rx="3.7" ry="15" fill="#fff" stroke="#3a3a3a" stroke-width="1.4"/><circle cx="4" cy="16" r="0.7" fill="#555"/></svg>
<div class="t" style="left:1616px;top:561px;width:12px;text-align:center;font-size:13px;line-height:14px;color:#000">6</div>
<div class="t" style="left:1612px;top:586.34px;font-size:12px;line-height:12px;color:#333;">PLA</div>
<div class="t" style="left:1334px;top:648.33px;font-size:13.2px;line-height:13.2px;color:#333;">Please place filaments on the printer based on grouping result.</div>
<div class="a" style="left:1328px;top:674px;width:447px;height:0;border-top:1px dashed #d0d0d4"></div>
<div class="t" style="left:1334px;top:683.50px;font-size:13px;line-height:13px;color:#f08a1e;">Tips:</div>
<div class="a" style="left:1323px;top:700px;width:457px;height:10px;overflow:hidden"><div class="t" style="left:11px;top:0.5px;font-size:13px;line-height:13px;color:#f08a1e;text-decoration:underline">Current grouping of slice result is not optimal.</div></div>
</body></html>
